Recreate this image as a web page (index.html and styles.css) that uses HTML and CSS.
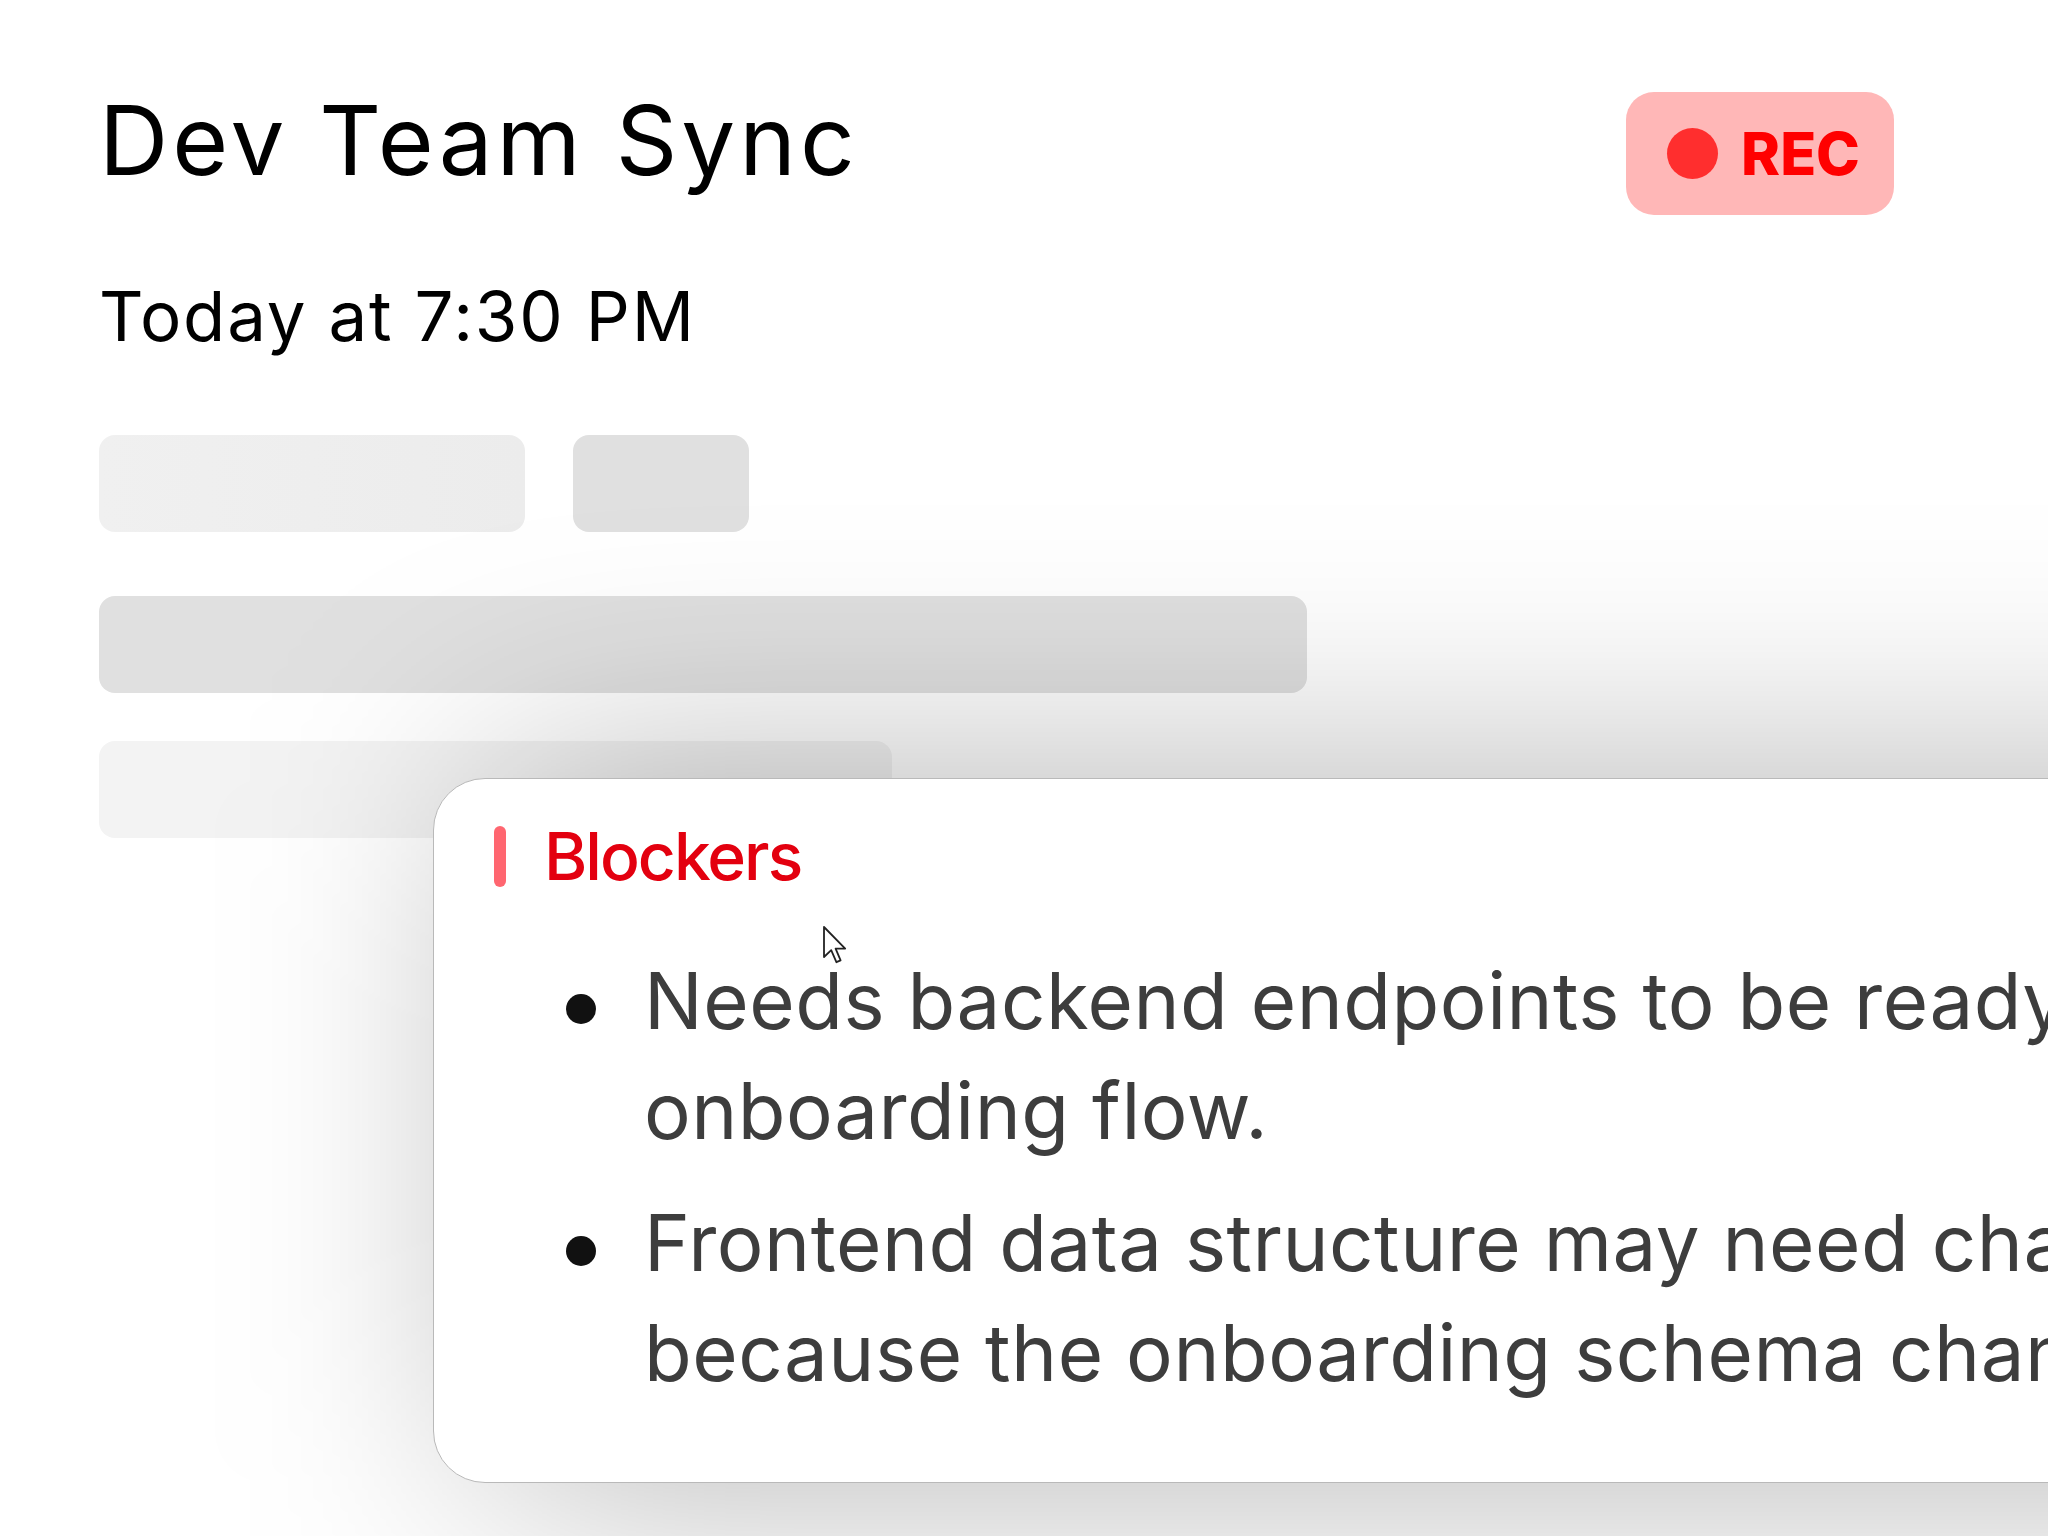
FILE: index.html
```html
<!DOCTYPE html>
<html lang="en">
<head>
<meta charset="utf-8">
<title>Dev Team Sync</title>
<link rel="stylesheet" href="styles.css">
</head>
<body>
<div class="page">
  <header class="header">
    <div class="titles">
      <h1 class="title">Dev Team Sync</h1>
      <p class="when">Today at 7:30 PM</p>
    </div>
    <div class="rec">
      <span class="rec-dot"></span>
      <span class="rec-label">REC</span>
    </div>
  </header>

  <div class="skeleton">
    <div class="sk-row">
      <div class="sk sk-1"></div>
      <div class="sk sk-2"></div>
    </div>
    <div class="sk sk-3"></div>
    <div class="sk sk-4"></div>
  </div>

  <div class="card-wrap">
    <div class="card-shadow"></div>
    <section class="card">
      <div class="card-head">
        <span class="accent"></span>
        <h2 class="card-title">Blockers</h2>
      </div>
      <ul class="list">
        <li class="item"><span class="item-text">Needs backend endpoints to be ready for the onboarding flow.</span></li>
        <li class="item"><span class="item-text">Frontend data structure may need changes because the onboarding schema changed.</span></li>
      </ul>
    </section>
  </div>
</div>

<svg class="cursor" width="26" height="40" viewBox="0 0 13 20" aria-hidden="true">
  <path d="M1 1 L1 16 L4.6 12.6 L7.2 18.6 L9.3 17.7 L6.8 11.8 L11.6 11.8 Z" fill="#ffffff" stroke="#222222" stroke-width="0.9" stroke-linejoin="round"/>
</svg>
</body>
</html>
```

FILE: styles.css
```css
html, body {
  margin: 0;
  padding: 0;
  overflow: hidden;
  background: #ffffff;
}

body {
  width: 2048px;
  height: 1536px;
  position: relative;
  font-family: "Inter", "Liberation Sans", sans-serif;
  color: #000;
}

.page {
  padding: 83px 154px 0 99px;
}

.header {
  display: flex;
  justify-content: space-between;
  align-items: flex-start;
}

.title {
  margin: 0;
  font-size: 96px;
  line-height: 114px;
  font-weight: 400;
  letter-spacing: 4px;
  color: #000;
}

.when {
  margin: 78px 0 0;
  font-size: 69px;
  line-height: 83px;
  font-weight: 400;
  letter-spacing: 1.8px;
  color: #000;
}

.rec {
  margin-top: 9px;
  height: 123px;
  box-sizing: border-box;
  padding: 0 34px 0 41px;
  display: flex;
  align-items: center;
  gap: 23px;
  background: #ffb7b7;
  border-radius: 28px;
}

.rec-dot {
  width: 51px;
  height: 51px;
  border-radius: 50%;
  background: #ff2e2e;
}

.rec-label {
  font-size: 59px;
  line-height: 1;
  font-weight: 800;
  color: #ff0000;
}

.skeleton {
  margin-top: 77px;
}

.sk-row {
  display: flex;
  gap: 48px;
}

.sk {
  height: 97px;
  border-radius: 16px;
}

.sk-1 {
  width: 426px;
  background: linear-gradient(90deg, #f0f0f0, #ececec);
}

.sk-2 {
  width: 176px;
  background: #e0e0e0;
}

.sk-3 {
  margin-top: 64px;
  width: 1208px;
  background: #e0e0e0;
}

.sk-4 {
  margin-top: 48px;
  width: 793px;
  background: #f3f3f3;
}

.card-wrap {
  position: relative;
  z-index: 1;
  margin: -60px 0 0 334px;
  width: max-content;
}

.card-shadow {
  position: absolute;
  top: 0;
  left: 0;
  right: 0;
  bottom: 0;
  border-radius: 52px;
  background: rgba(0, 0, 0, 0.3);
  transform: translateX(55px);
  filter: blur(125px);
}

.card {
  position: relative;
  box-sizing: border-box;
  padding: 44px 60px 74px 60px;
  background: #ffffff;
  border: 1px solid #b9b9b9;
  border-radius: 52px;
}

.card-head {
  display: flex;
  align-items: center;
  gap: 38px;
  height: 66px;
}

.accent {
  width: 12px;
  height: 61px;
  border-radius: 6px;
  background: #ff6670;
}

.card-title {
  margin: 0;
  font-size: 66px;
  line-height: 66px;
  font-weight: 500;
  letter-spacing: -2px;
  color: #e3000f;
}

.list {
  list-style: none;
  margin: 57px 0 0;
  padding: 0 0 0 72px;
  display: flex;
  flex-direction: column;
  gap: 22px;
}

.item {
  display: flex;
  align-items: flex-start;
  gap: 48px;
}

.item::before {
  content: "";
  flex: 0 0 30px;
  height: 30px;
  margin-top: 48px;
  border-radius: 50%;
  background: #111111;
}

.item-text {
  width: 1850px;
  font-size: 78px;
  line-height: 110px;
  letter-spacing: 0.5px;
  color: #3d3d3d;
}

.cursor {
  position: absolute;
  left: 822px;
  top: 925px;
  z-index: 2;
}
```
